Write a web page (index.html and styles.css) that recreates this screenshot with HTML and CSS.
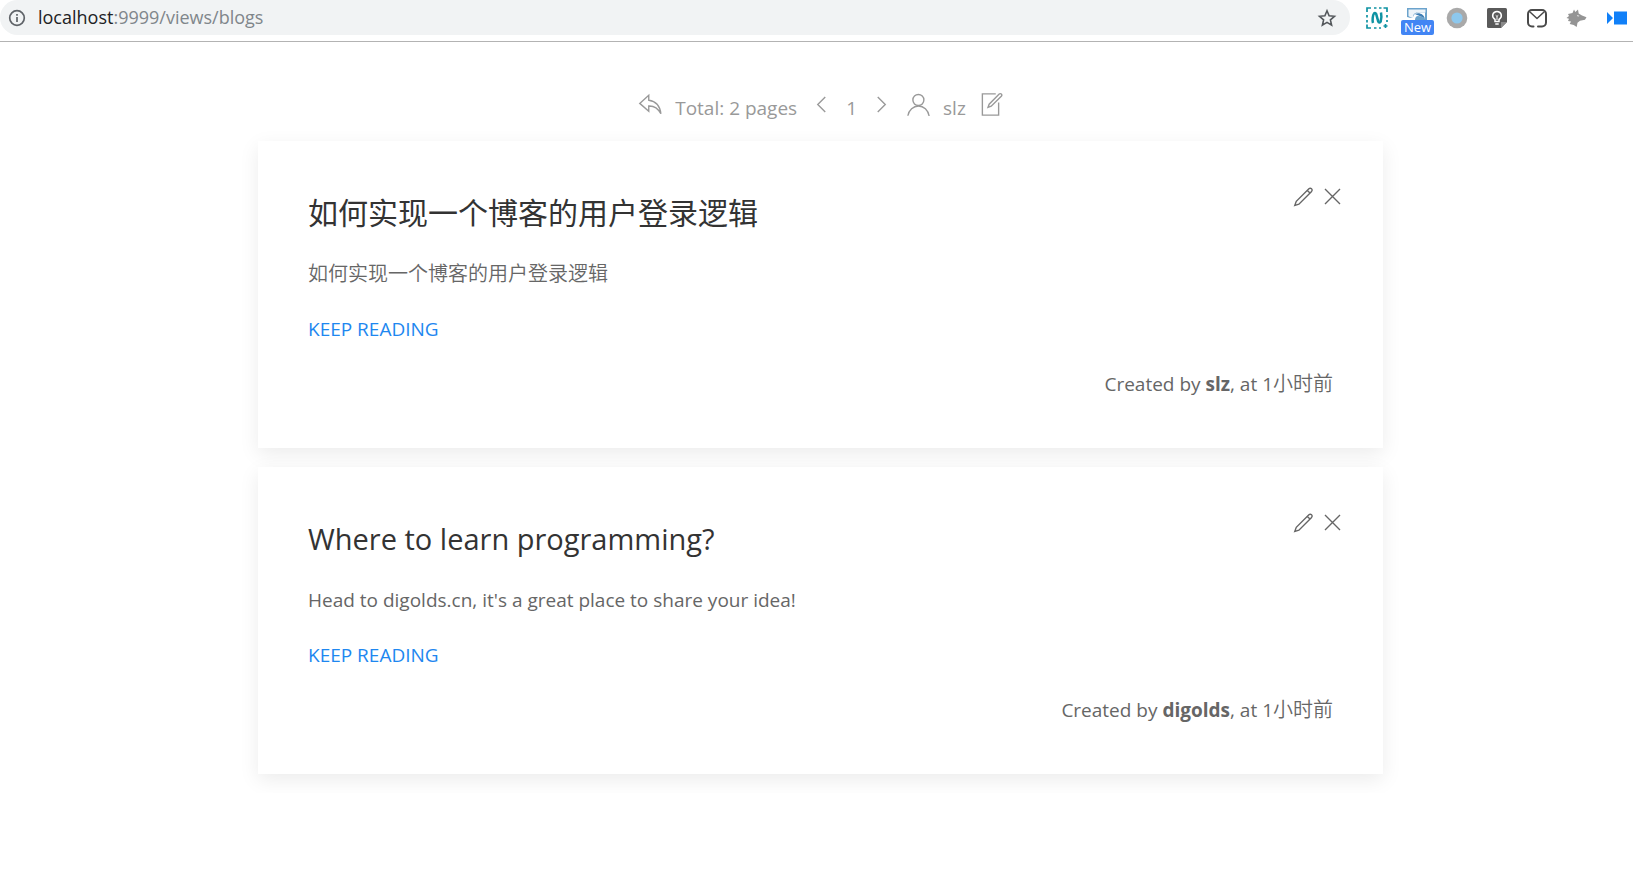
FILE: index.html
```html
<!DOCTYPE html>
<html lang="en">
<head>
<meta charset="utf-8">
<title>Blogs</title>
<link rel="stylesheet" href="styles.css">
</head>
<body>
<header class="browser-bar">
  <div class="address">
    <button class="plain" aria-label="Site information">
      <svg width="18" height="18" viewBox="0 0 18 18" fill="none" stroke="#5f6368" stroke-width="1.7"><circle cx="9" cy="9" r="7.3"/><path d="M9 8v5M9 5v1.8"/></svg>
    </button>
    <span class="url"><span class="host">localhost</span>:9999/views/blogs</span>
    <button class="plain" aria-label="Bookmark this page">
      <svg width="20" height="20" viewBox="0 0 20 20" fill="none" stroke="#54585c" stroke-width="1.6" stroke-linejoin="miter"><path d="M10 2.800l2.100 5 5.400.5-4.100 3.600 1.200 5.300-4.600-2.800-4.600 2.800 1.200-5.300-4.100-3.600 5.400-.5z"/></svg>
    </button>
  </div>
  <nav class="extensions" aria-label="Extensions">
    <button class="plain ext" aria-label="Capture">
      <svg width="22" height="22" viewBox="0 0 22 22" fill="none" stroke="#0f93a3" stroke-width="1.700"><path d="M1 5V1h4M8 1h2.500M13 1h2.500M17.500 1H21v4M21 8v2.500M21 13v2M1 8v2.500M1 13v2.500M1 17.500V21h4M8 21h2.500M13 21h2M19.500 17v4M17.500 19h4"/><path d="M7 16c-.8-2.500-.3-8 1-9.500 1-1 1.900-.3 2.300.8l1.900 7c.4 1.500 2 1.500 2.500.2.700-2 .8-6.400.3-9" stroke-width="2.500"/></svg>
    </button>
    <button class="plain ext" aria-label="Notes, new">
      <svg width="22" height="22" viewBox="0 0 22 22"><path d="M1 1h20v12H1z" fill="#6ba3cc"/><path d="M2.500 2.500h17v3H12C8 5.500 7 8 7 10c-1.500.6-3 .3-4.500-1z" fill="#edf4f9"/><path d="M1 10c3 1 4 1 6 0 1-3 3-4.500 6-4.500h6V12c-2-2-4-3-7-3-2 0-3 2-3 4H1z" fill="#fff"/><path d="M9 7c4-2 9 0 10 5-3-3-6-3-10-5z" fill="#3f7fb5"/></svg>
      <span class="badge">New</span>
    </button>
    <button class="plain ext" aria-label="Recorder">
      <svg width="22" height="22" viewBox="0 0 22 22"><circle cx="11" cy="11" r="10.300" fill="#a9a9a9"/><circle cx="11" cy="11" r="5.600" fill="#8dc8ee"/></svg>
    </button>
    <button class="plain ext" aria-label="Keep">
      <svg width="22" height="22" viewBox="0 0 22 22"><path d="M2.500 1h17q1.500 0 1.500 1.500V15l-6 6H2.500Q1 21 1 19.500v-17Q1 1 2.500 1z" fill="#5a5a5a"/><path d="M15 21v-6h6z" fill="#8a8a8a"/><path d="M9 12.500C5 10 6.500 4.500 11 4.500s6 5.500 2 8v2H9zM9.300 17h3.400" fill="none" stroke="#fff" stroke-width="1.500"/><path d="M11 13V9.500L9.700 8.300M11 9.500l1.300-1.200" fill="none" stroke="#fff"/></svg>
    </button>
    <button class="plain ext" aria-label="Mail">
      <svg width="22" height="22" viewBox="0 0 22 22" fill="none" stroke="#4a4a4a" stroke-width="2" stroke-linecap="round" stroke-linejoin="round"><path d="M7.500 19.500H6A4 4 0 0 1 2 15.500V7A4 4 0 0 1 6 3h10a4 4 0 0 1 4 4v8.500a4 4 0 0 1-4 4h-4"/><path d="M4 5l7 6.500L18 5" stroke-width="1.500"/></svg>
    </button>
    <button class="plain ext" aria-label="Fox">
      <svg width="22" height="22" viewBox="0 0 22 22"><path d="M2 7l4.500-1 1.500-3.500L9.300 5 12 2.500l.7 4 3.300 2 4.500 1.700-1.500 2.500-5 1-2.500 2-.8 4.300-3-2-4-1 1.300-2.500L2 14l1-2.200-2.500-.8L3 9z" fill="#949494"/><path d="M11 8l2.500 1-1.700.4z" fill="#fff"/></svg>
    </button>
    <button class="plain ext" aria-label="Video">
      <svg width="22" height="22" viewBox="0 0 22 22" fill="#1180f8"><path d="M8 4.500h13v13H8zM1 5l6 6-6 6z"/></svg>
    </button>
  </nav>
</header>

<main class="page">
  <nav class="pager" aria-label="Pages">
    <a href="#back" aria-label="Back"><svg class="icon" viewBox="0 0 20 20"><path d="M18.300 17.400C17.500 10.500 13.500 7.200 8.600 6.600V2.600L1.400 9.100l7.200 6.300v-4.200c4.200-.2 7.600 2.200 9.700 6.200z"/></svg></a>
    <span class="label">Total: 2 pages</span>
    <a href="#prev" aria-label="Previous page"><svg class="icon" viewBox="0 0 20 20"><path d="M13 16L7 10l6-6"/></svg></a>
    <span class="label">1</span>
    <a href="#next" aria-label="Next page"><svg class="icon" viewBox="0 0 20 20"><path d="M7 4l6 6-6 6"/></svg></a>
    <a href="#user" aria-label="User"><svg class="icon" viewBox="0 0 20 20"><circle cx="9.900" cy="6.400" r="4.400"/><path d="M1.500 19C2.300 14.500 5.800 11.200 10 11.200s7.700 3.400 8.500 8"/></svg></a>
    <span class="label">slz</span>
    <a href="#new" aria-label="New post"><svg class="icon" viewBox="0 0 20 20"><path d="M18.650 1.680c-.24-.23-.54-.35-.84-.35-.31 0-.6.120-.83.350L8.920 9.760 8 12.330l2.550-.92 8.100-8.070c.47-.47.47-1.190 0-1.660z"/><path d="M16.500 8.480V18.500h-13v-17h10.710"/></svg></a>
  </nav>

  <article class="card">
    <div class="card-tools">
      <button class="plain" aria-label="Edit"><svg class="icon" viewBox="0 0 20 20"><path d="M17.250 6.010L7.120 16.100l-3.300 1.100 1.200-3.300L15.120 3.880c.59-.59 1.540-.59 2.130 0 .58.590.58 1.540 0 2.130z"/><path d="M15.980 7.270l-2.130-2.120"/></svg></button>
      <button class="plain" aria-label="Delete"><svg class="icon" viewBox="0 0 20 20"><path d="M16 16L4 4M16 4L4 16"/></svg></button>
    </div>
    <h2 class="title title-zh" lang="zh">如何实现一个博客的用户登录逻辑</h2>
    <p class="zh" lang="zh">如何实现一个博客的用户登录逻辑</p>
    <p><a class="more" href="#post-1">KEEP READING</a></p>
    <p class="meta">Created by <strong>slz</strong>, at 1<span class="zh" lang="zh">小时前</span></p>
  </article>

  <article class="card">
    <div class="card-tools">
      <button class="plain" aria-label="Edit"><svg class="icon" viewBox="0 0 20 20"><path d="M17.250 6.010L7.120 16.100l-3.300 1.100 1.200-3.300L15.120 3.880c.59-.59 1.540-.59 2.130 0 .58.590.58 1.540 0 2.130z"/><path d="M15.980 7.270l-2.130-2.120"/></svg></button>
      <button class="plain" aria-label="Delete"><svg class="icon" viewBox="0 0 20 20"><path d="M16 16L4 4M16 4L4 16"/></svg></button>
    </div>
    <h2 class="title">Where to learn programming?</h2>
    <p>Head to digolds.cn, it's a great place to share your idea!</p>
    <p><a class="more" href="#post-2">KEEP READING</a></p>
    <p class="meta">Created by <strong>digolds</strong>, at 1<span class="zh" lang="zh">小时前</span></p>
  </article>
</main>
</body>
</html>
```
FILE: styles.css
```css
* {
  box-sizing: border-box;
}

body {
  margin: 0;
  background: #fff;
  color: #666;
  font: 19px/30px "Open Sans", "Noto Sans CJK SC", sans-serif;
}

a {
  color: inherit;
  text-decoration: none;
}

.plain {
  display: block;
  padding: 0;
  border: 0;
  background: none;
  color: inherit;
}

svg {
  display: block;
}

.icon {
  width: 25px;
  height: 25px;
  fill: none;
  stroke: currentColor;
  stroke-width: 1.1;
}

/* Browser bar */

.browser-bar {
  display: flex;
  height: 42px;
  padding-right: 5px;
  border-bottom: 1px solid #b3b3b3;
}

.address {
  display: flex;
  flex: 1;
  align-items: center;
  height: 35px;
  padding: 0 13px 0 8px;
  border-radius: 18px;
  background: #f1f3f4;
}

.url {
  flex: 1;
  padding: 0 0 2px 12px;
  color: #80868b;
  font-size: 18px;
}

.host {
  color: #202124;
}

.extensions {
  display: flex;
  align-items: center;
  gap: 18px;
  height: 35px;
  padding-left: 16px;
}

.ext {
  position: relative;
}

.badge {
  position: absolute;
  top: 13px;
  left: -5px;
  width: 33px;
  border-radius: 2px;
  background: #4285f4;
  color: #fff;
  font: 13px/15px "Open Sans", sans-serif;
  text-align: center;
}

/* Page */

.page {
  width: 1133px;
  max-width: 100%;
  margin: 0 auto;
  padding: 50px 0 0 8px;
}

.pager {
  display: flex;
  justify-content: center;
  gap: 12px;
  margin-bottom: 18px;
  color: #999;
}

.label {
  padding-top: 1px;
}

.card {
  position: relative;
  margin-bottom: 19px;
  padding: 51px 50px 49px;
  background: #fff;
  box-shadow: 0 6px 19px rgba(0, 0, 0, 0.08);
}

.card-tools {
  position: absolute;
  top: 43px;
  right: 38px;
  display: flex;
  gap: 5px;
}

.title {
  margin: 0;
  color: #333;
  font-size: 29px;
  font-weight: 400;
  line-height: 42px;
}

.title-zh {
  font-size: 30px;
}

.card p {
  margin: 25px 0 0;
}

.card .zh {
  font-size: 20px;
  font-weight: 350;
  line-height: 30px;
}

.more {
  color: #1e87f0;
}

.card .meta {
  text-align: right;
}
```
